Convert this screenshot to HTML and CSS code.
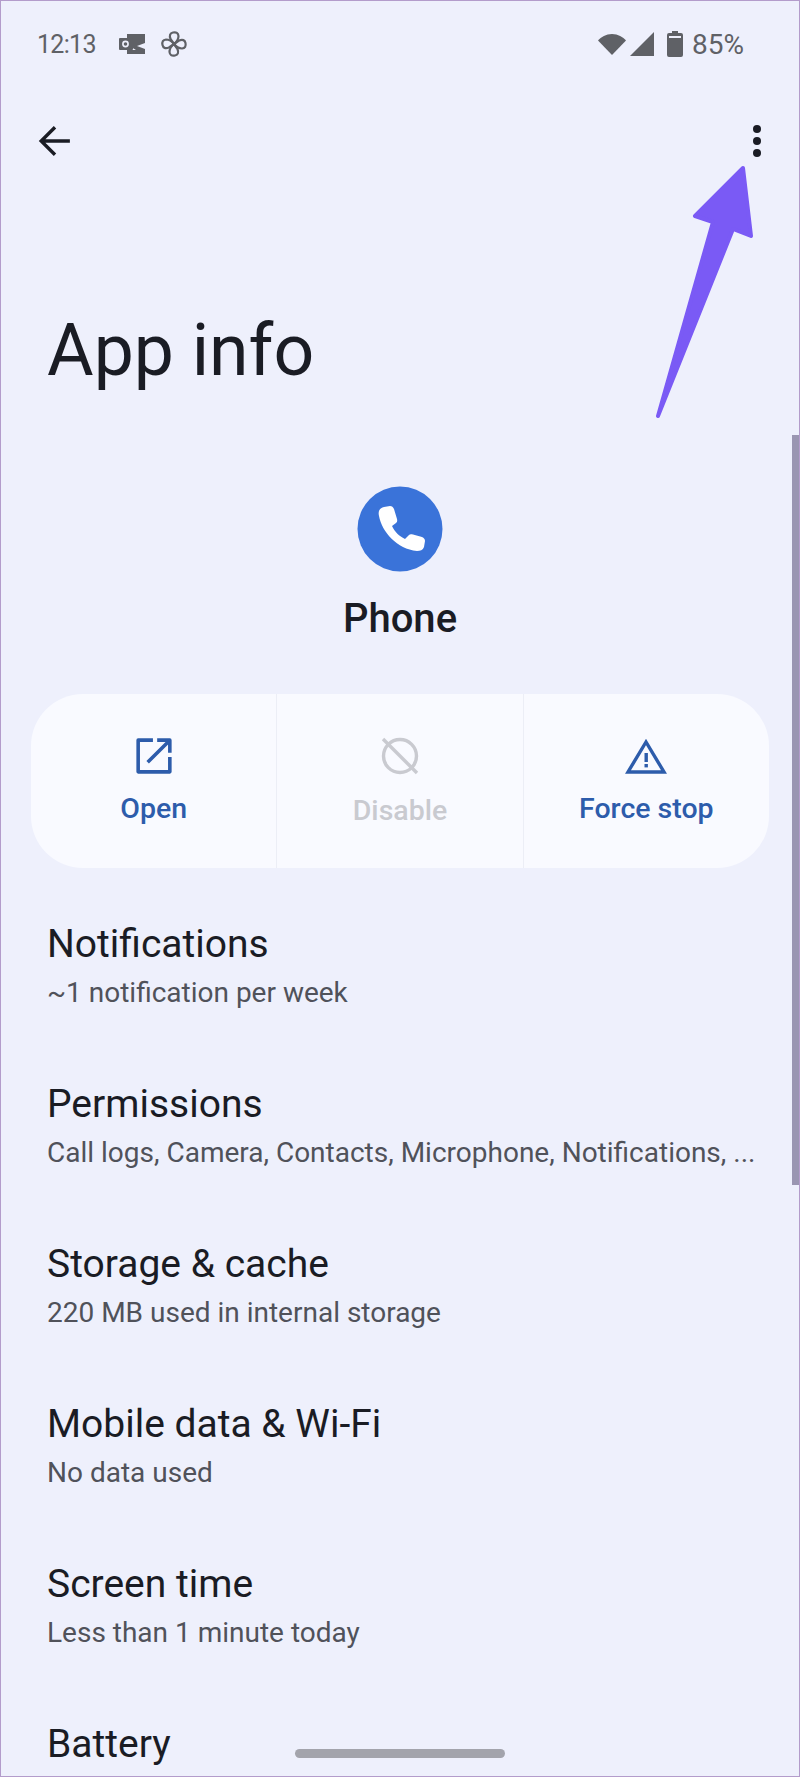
FILE: index.html
```html
<!DOCTYPE html>
<html lang="en">

<head>
    <meta charset="UTF-8">
    <meta name="viewport" content="width=device-width, initial-scale=1.0">
    <title>App info</title>
    <link rel="stylesheet" href="styles.css">
</head>

<body>
    <div class="screen">
        <!-- Status bar -->
        <div class="status-bar">
            <div class="status-left">
                <span class="clock">12:13</span>
                <svg class="icon-outlook" viewBox="0 0 28 22" width="28" height="22">
                    <path d="M9 1h18v9l-8 3 8 3v5H9v-4h9l-5-3V6H9z" fill="#5f6166"/>
                    <rect x="1" y="5" width="14" height="12" rx="1" fill="#5f6166"/>
                    <circle cx="7.5" cy="11" r="2.6" fill="none" stroke="#eef0fc" stroke-width="1.6"/>
                </svg>
                <svg class="icon-fan" viewBox="0 0 28 28" width="28" height="28">
                    <g fill="none" stroke="#5f6166" stroke-width="2.200" stroke-linejoin="round">
                        <path d="M14 14L10.500 9Q8.500 3.500 13 2.500Q18 1.500 18.500 6Q18.500 10.500 14 14Z"/>
                        <path d="M14 14L10.500 9Q8.500 3.500 13 2.500Q18 1.500 18.500 6Q18.500 10.500 14 14Z" transform="rotate(90 14 14)"/>
                        <path d="M14 14L10.500 9Q8.500 3.500 13 2.500Q18 1.500 18.500 6Q18.500 10.500 14 14Z" transform="rotate(180 14 14)"/>
                        <path d="M14 14L10.500 9Q8.500 3.500 13 2.500Q18 1.500 18.500 6Q18.500 10.500 14 14Z" transform="rotate(270 14 14)"/>
                    </g>
                </svg>
            </div>
            <div class="status-right">
                <svg viewBox="0 0 30 24" width="30" height="24">
                    <path d="M15 23L1 8.500C4 5 9 2 15 2s11 3 14 6.500z" fill="#5f6166"/>
                </svg>
                <svg viewBox="0 0 24 24" width="24" height="24">
                    <path d="M24 0v24H0z" fill="#5f6166"/>
                </svg>
                <svg class="icon-battery" viewBox="0 0 16 26" width="16" height="26">
                    <path d="M5 0h6v2h3a2 2 0 0 1 2 2v20a2 2 0 0 1-2 2H2a2 2 0 0 1-2-2V4a2 2 0 0 1 2-2h3z" fill="#5f6166"/>
                    <rect x="2" y="5" width="12" height="2" fill="#eef0fc"/>
                </svg>
                <span class="battery-level">85%</span>
            </div>
        </div>

        <!-- Top bar -->
        <div class="top-bar">
            <svg viewBox="0 0 32 32" width="34" height="34">
                <path d="M30 16H4M16 3L3 16l13 13" fill="none" stroke="#1a1c24" stroke-width="3.200"/>
            </svg>
            <div class="more">
                <span class="dot"></span>
                <span class="dot"></span>
                <span class="dot"></span>
            </div>
        </div>

        <h1>App info</h1>

        <!-- App header -->
        <div class="app-header">
            <svg class="app-icon" viewBox="0 0 86 86" width="86" height="86">
                <circle cx="43" cy="43" r="42.500" fill="#3a73d9"/>
                <path d="M22 30C21 26 22 22 27 21L33 20C35 20 36 21 37 23L40 33C40.500 35 40 36 39 37L35 40C38 46 42 50 48 53L52 49C53 48 54 48 56 48.500L65 51C67 52 68 53 68 55L67 61C66 64 63 65 60 65C40 63 25 46 22 30Z" fill="#ffffff"/>
            </svg>
            <div class="app-name">Phone</div>
        </div>

        <!-- Action buttons -->
        <div class="actions">
            <div class="action">
                <svg class="icon-open" viewBox="0 0 36 36" width="38" height="38">
                    <path d="M17 3H3v30h30V19M21 3h12v12M33 3L12 24" fill="none" stroke="#2d5cab" stroke-width="3.400" stroke-linejoin="round"/>
                </svg>
                <span>Open</span>
            </div>
            <div class="action disabled">
                <svg viewBox="0 0 40 40" width="40" height="40">
                    <circle cx="20" cy="20" r="16.500" fill="none" stroke="#c9cad0" stroke-width="3.400"/>
                    <path d="M3 3l34 34" fill="none" stroke="#c9cad0" stroke-width="3.400"/>
                </svg>
                <span>Disable</span>
            </div>
            <div class="action">
                <svg viewBox="0 0 42 36" width="42" height="36">
                    <path d="M21 4L3 34h36z" fill="none" stroke="#2d5cab" stroke-width="3.400"/>
                    <rect x="19.500" y="15" width="3.400" height="9" fill="#2d5cab"/>
                    <rect x="19.500" y="26" width="3.400" height="3.400" fill="#2d5cab"/>
                </svg>
                <span>Force stop</span>
            </div>
        </div>

        <!-- Settings list -->
        <ul class="settings">
            <li>
                <div class="item-title">Notifications</div>
                <div class="item-sub">~1 notification per week</div>
            </li>
            <li>
                <div class="item-title">Permissions</div>
                <div class="item-sub">Call logs, Camera, Contacts, Microphone, Notifications, ...</div>
            </li>
            <li>
                <div class="item-title">Storage &amp; cache</div>
                <div class="item-sub">220 MB used in internal storage</div>
            </li>
            <li>
                <div class="item-title">Mobile data &amp; Wi-Fi</div>
                <div class="item-sub">No data used</div>
            </li>
            <li>
                <div class="item-title">Screen time</div>
                <div class="item-sub">Less than 1 minute today</div>
            </li>
            <li>
                <div class="item-title">Battery</div>
            </li>
        </ul>

        <!-- Overlays -->
        <div class="scrollbar"></div>
        <div class="home-bar"></div>
        <svg class="arrow" viewBox="0 0 800 500" width="800" height="500">
            <path d="M743 167L695 215L713 221L658 415L733 228L751 235Z" fill="#7a5af5" stroke="#7a5af5" stroke-width="4" stroke-linejoin="round"/>
        </svg>
    </div>
</body>

</html>
```

FILE: styles.css
```css
/* General body styles */
body {
    margin: 0;
    font-family: Roboto, "Noto Sans", sans-serif;
}

.screen {
    position: relative;
    box-sizing: border-box;
    width: 800px;
    height: 1777px;
    overflow: hidden;
    background-color: #eef0fc;
    border: 1px solid #b39ccb;
    color: #1a1c24;
}

/* Status bar */
.status-bar {
    display: flex;
    justify-content: space-between;
    align-items: center;
    height: 30px;
    padding: 28px 55px 0 36px;
    color: #5f6166;
    font-size: 25px;
}

.status-left,
.status-right {
    display: flex;
    align-items: center;
}

.clock {
    margin-right: 22px;
    letter-spacing: -0.7px;
}

.icon-outlook {
    margin-right: 14px;
}

.status-right svg {
    margin-right: 3px;
}

.status-right .icon-battery {
    margin: 0 9px 0 10px;
}

.battery-level {
    font-size: 28px;
}

/* Top bar */
.top-bar {
    display: flex;
    justify-content: space-between;
    align-items: center;
    height: 50px;
    padding: 57px 38px 0 37px;
}

.more {
    display: flex;
    flex-direction: column;
    gap: 4px;
}

.dot {
    width: 8px;
    height: 8px;
    border-radius: 50%;
    background-color: #1a1c24;
}

/* Title */
h1 {
    margin: 140px 0 0 46px;
    font-size: 71.5px;
    font-weight: 400;
    line-height: 90px;
}

/* App header */
.app-header {
    display: flex;
    flex-direction: column;
    align-items: center;
    margin-top: 90px;
}

.app-name {
    margin-top: 22px;
    font-size: 40px;
    font-weight: 500;
    line-height: 50px;
}

/* Action buttons */
.actions {
    display: flex;
    height: 174px;
    margin: 50px 30px 0;
    border-radius: 52px;
    background-color: #f9faff;
}

.action {
    flex: 1;
    display: flex;
    flex-direction: column;
    align-items: center;
    justify-content: center;
    gap: 18px;
    color: #2d5cab;
    font-size: 28.5px;
    font-weight: 500;
    border-left: 1px solid #eceef6;
}

.action:first-child {
    border-left: none;
}

.action.disabled {
    color: #c9cad0;
}

.icon-open {
    margin: -1px 0;
}

/* Settings list */
.settings {
    list-style: none;
    margin: 0;
    padding: 0 0 0 46px;
}

.settings li {
    height: 160px;
}

.settings li:first-child {
    margin-top: 52px;
}

.item-title {
    font-size: 39px;
    line-height: 48px;
}

.item-sub {
    margin-top: 5px;
    color: #50525a;
    font-size: 28px;
    line-height: 40px;
    white-space: nowrap;
}

/* Overlays */
.scrollbar {
    position: absolute;
    top: 434px;
    right: 0;
    width: 7px;
    height: 750px;
    background-color: #9a96b2;
}

.home-bar {
    position: absolute;
    left: 294px;
    bottom: 18px;
    width: 210px;
    height: 9px;
    border-radius: 5px;
    background-color: #a3a4ac;
}

.arrow {
    position: absolute;
    top: 0;
    left: -1px;
}
```
